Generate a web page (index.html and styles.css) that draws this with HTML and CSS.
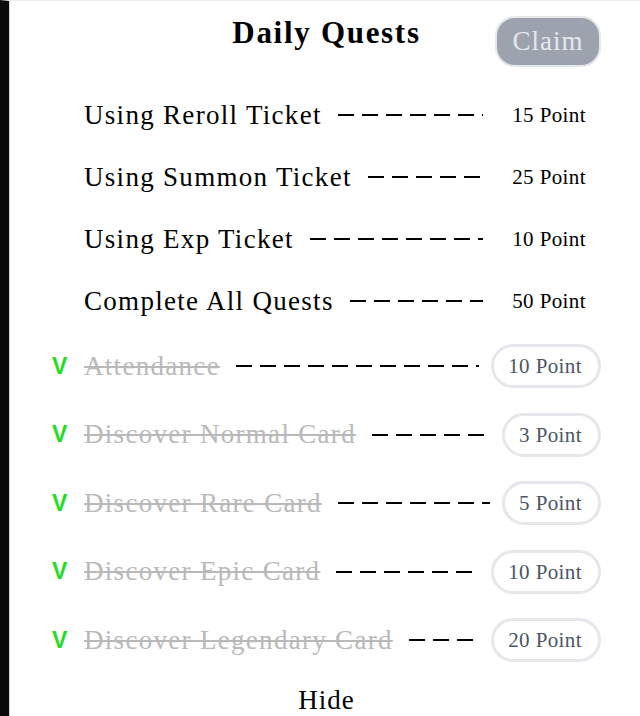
FILE: index.html
```html
<!DOCTYPE html>
<html lang="en">
<head>
    <meta charset="UTF-8">
    <title>Daily Quests</title>
    <link rel="stylesheet" href="styles.css">
</head>
<body>
    <div class="panel">
        <div class="header">
            <div></div>
            <div class="title">Daily Quests</div>
            <button class="claim-btn" disabled>Claim</button>
        </div>

        <div class="quest-list">
            <div class="quest">
                <span class="check"></span>
                <span class="quest-name">Using Reroll Ticket</span>
                <span class="dashes"></span>
                <span class="points">15 Point</span>
            </div>
            <div class="quest">
                <span class="check"></span>
                <span class="quest-name">Using Summon Ticket</span>
                <span class="dashes"></span>
                <span class="points">25 Point</span>
            </div>
            <div class="quest">
                <span class="check"></span>
                <span class="quest-name">Using Exp Ticket</span>
                <span class="dashes"></span>
                <span class="points">10 Point</span>
            </div>
            <div class="quest">
                <span class="check"></span>
                <span class="quest-name">Complete All Quests</span>
                <span class="dashes"></span>
                <span class="points">50 Point</span>
            </div>

            <div class="quest done">
                <span class="check">V</span>
                <span class="quest-name">Attendance</span>
                <span class="dashes"></span>
                <span class="points">10 Point</span>
            </div>
            <div class="quest done">
                <span class="check">V</span>
                <span class="quest-name">Discover Normal Card</span>
                <span class="dashes"></span>
                <span class="points">3 Point</span>
            </div>
            <div class="quest done">
                <span class="check">V</span>
                <span class="quest-name">Discover Rare Card</span>
                <span class="dashes"></span>
                <span class="points">5 Point</span>
            </div>
            <div class="quest done">
                <span class="check">V</span>
                <span class="quest-name">Discover Epic Card</span>
                <span class="dashes"></span>
                <span class="points">10 Point</span>
            </div>
            <div class="quest done">
                <span class="check">V</span>
                <span class="quest-name">Discover Legendary Card</span>
                <span class="dashes"></span>
                <span class="points">20 Point</span>
            </div>
        </div>

        <div class="hide-link">Hide</div>
    </div>
</body>
</html>
```

FILE: styles.css
```css
:root {
    --text: #000000;
    --done-text: #b9b9b9;
    --badge-border: #e5e7eb;
    --badge-text: #4b5563;
    --check: #22dd22;
    --claim-bg: #9ca3af;
}

* {
    margin: 0;
    padding: 0;
    box-sizing: border-box;
}

body {
    background: #ffffff;
    font-family: "Liberation Serif", "Times New Roman", serif;
    color: var(--text);
}

.panel {
    min-height: 716px;
    border-left: 9px solid #0a0a0a;
    box-shadow: inset 1px 0 0 #d8d8d8;
    border-top: 1px solid #f0f0f0;
}

.header {
    display: grid;
    grid-template-columns: 1fr auto 1fr;
    align-items: start;
    height: 83px;
    padding: 0 39px;
}

.title {
    font-size: 31px;
    font-weight: 700;
    line-height: 36px;
    margin-top: 14px;
    margin-left: 4px;
    letter-spacing: 1.7px;
}

.claim-btn {
    justify-self: end;
    margin-top: 15px;
    height: 51px;
    width: 106px;
    border: 2px solid var(--badge-border);
    border-radius: 20px;
    background: var(--claim-bg);
    color: #e5e7eb;
    font-family: inherit;
    font-size: 27px;
    letter-spacing: 1px;
}

.quest-list {
    padding: 0 39px 0 43px;
}

.quest {
    display: flex;
    align-items: center;
    height: 62px;
}

.quest.done {
    height: 68.5px;
}

.check {
    width: 32px;
    flex-shrink: 0;
    color: var(--check);
    font-family: "Liberation Sans", Arial, sans-serif;
    font-weight: 700;
    font-size: 23px;
}

.quest-name {
    font-size: 27px;
    letter-spacing: 1.3px;
    white-space: nowrap;
}

.done .quest-name {
    color: var(--done-text);
    text-decoration: line-through;
    text-decoration-thickness: 2px;
}

.dashes {
    flex: 1;
    height: 2px;
    margin: 0 12px 0 16px;
    background: repeating-linear-gradient(to right, #000 0 16px, transparent 16px 24px);
}

.points {
    flex-shrink: 0;
    font-size: 21px;
    line-height: 38px;
    padding: 0 12px 0 14px;
    border: 3px solid transparent;
    border-radius: 22px;
    letter-spacing: 0.4px;
    white-space: nowrap;
}

.done .points {
    border-color: var(--badge-border);
    color: var(--badge-text);
    padding: 0 16px 0 14px;
}

.hide-link {
    text-align: center;
    font-size: 27px;
    letter-spacing: 1px;
    padding-top: 10px;
    padding-left: 4px;
}
```
